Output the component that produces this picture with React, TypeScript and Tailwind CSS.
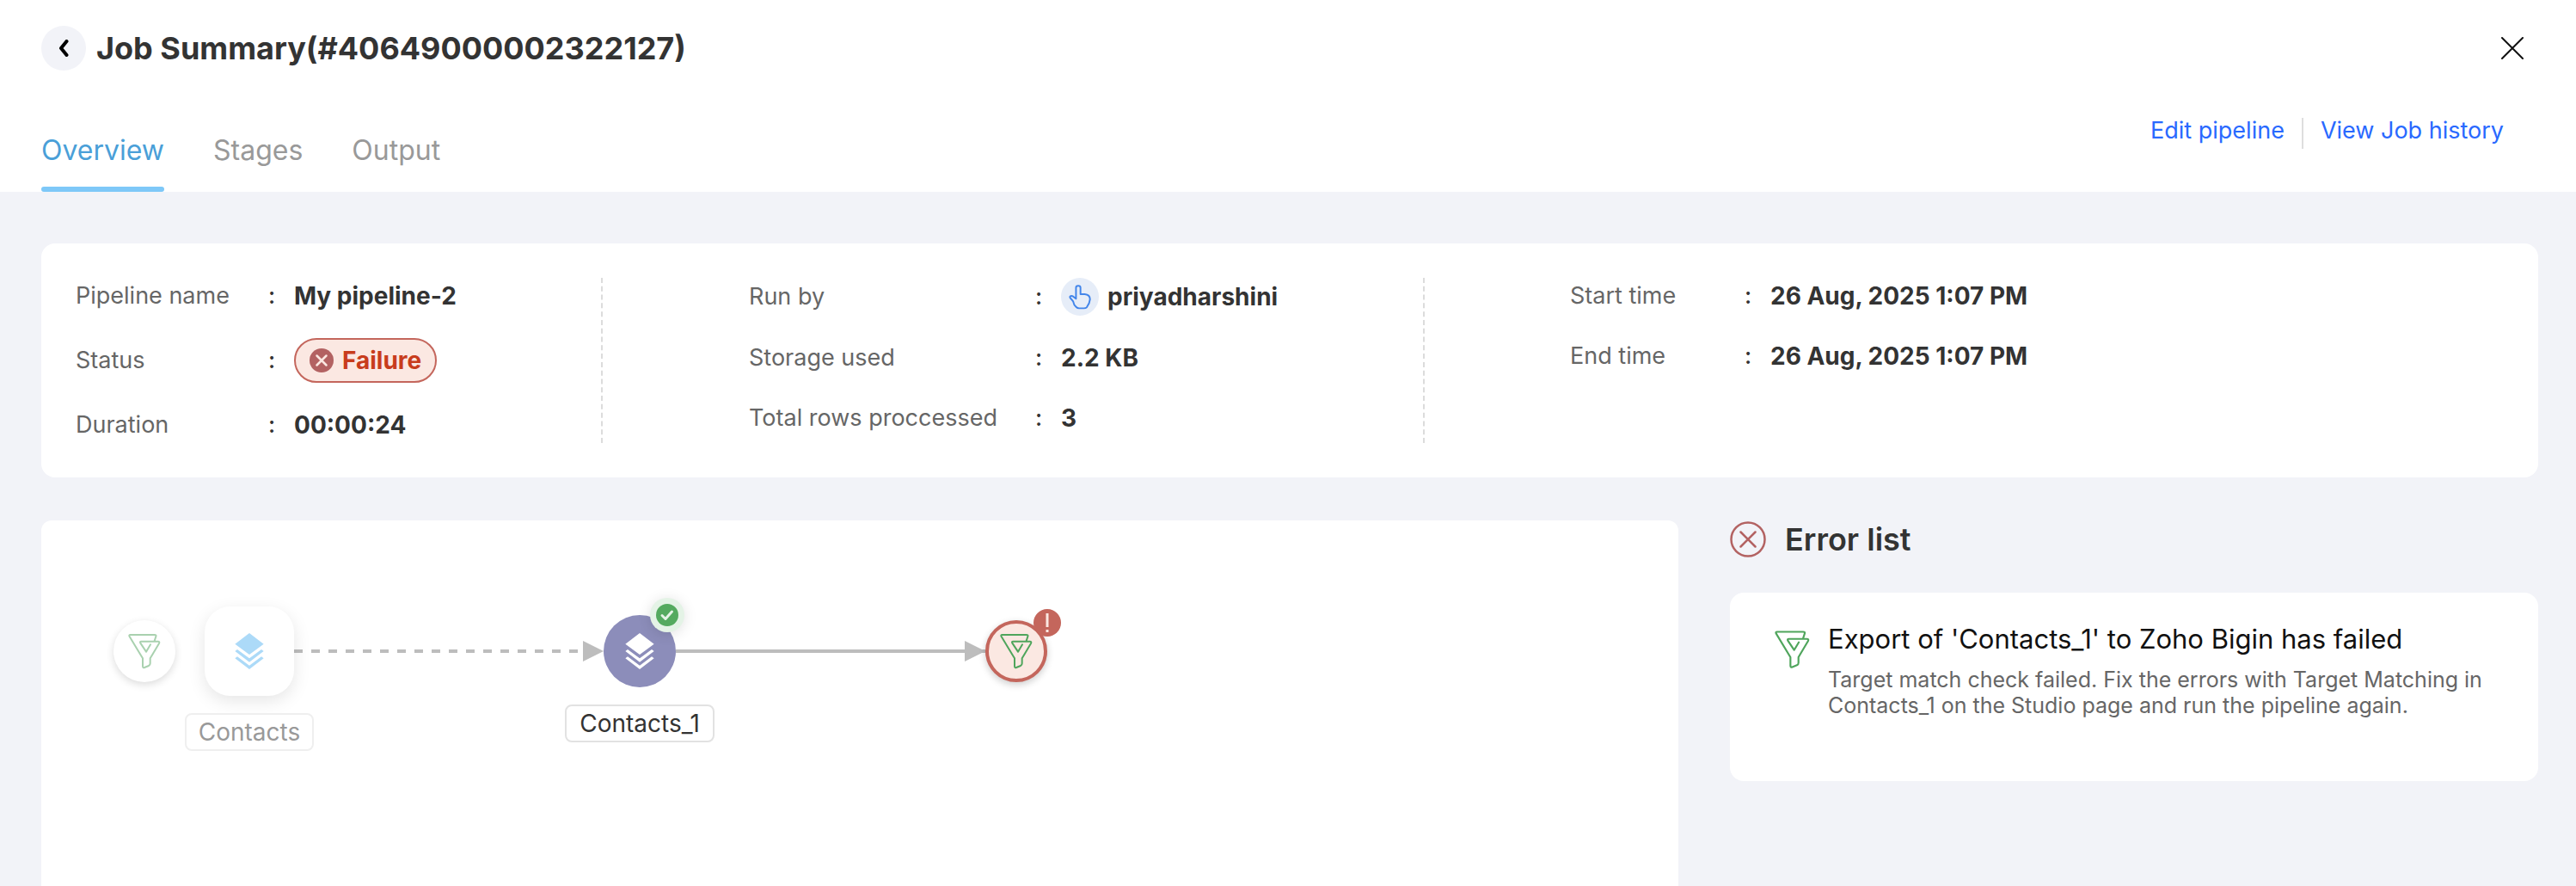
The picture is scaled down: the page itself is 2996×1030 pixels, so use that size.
import type { ReactNode } from 'react';

function FunnelIcon({ className }: { className: string }) {
  return (
    <svg viewBox="0 0 114 126" className={className} fill="none" stroke="currentColor" strokeWidth="6" strokeLinecap="round" strokeLinejoin="round" aria-hidden="true">
      <path d="M92 27 L97 12 Q99 6 92 6 H8 Q2 6 5 12 L51 88 V115 Q51 122 57 120 L72 114 Q77 112 77 106 V88 L108 36 Q111 29 104 29 H46 Q40 29 43 35 L63 65 L78 40" />
    </svg>
  );
}

function LayersIcon({ className }: { className: string }) {
  return (
    <svg viewBox="0 0 100 126" className={className} fill="currentColor" aria-hidden="true">
      <path d="M50 0 100 38 50 75 0 38Z" />
      <path d="M0 63 8 57 50 88 92 57 100 63 50 101Z" />
      <path d="M0 88 8 82 50 113 92 82 100 88 50 126Z" />
    </svg>
  );
}

function HandIcon() {
  return (
    <svg viewBox="64 58 84 92" className="h-[30px] w-[28px]" fill="none" stroke="#4285ea" strokeWidth="6" strokeLinejoin="round" aria-hidden="true">
      <path d="M92 72 Q92 65 100 65 Q108 65 108 72 V95 H123 Q142 97 142 113 Q141 128 130 142 Q127 145 120 145 H103 Q97 145 93 141 Q84 133 82 121 Q79 116 73 110 Q68 105 72 102 Q76 99 82 103 L92 111 Z" />
    </svg>
  );
}

function Field({ label, width, children }: { label: string; width: string; children: ReactNode }) {
  return (
    <div className="flex items-center">
      <dt className={`flex shrink-0 justify-between text-[27px] leading-[42px] text-[#666] ${width}`}>
        {label}
        <span className="w-[30px] font-medium text-[#333]">:</span>
      </dt>
      <dd className="text-[28px] leading-[42px] font-bold text-[#333]">{children}</dd>
    </div>
  );
}

function Summary() {
  return (
    <section className="grid grid-cols-[653fr_956fr_1295fr] rounded-2xl bg-white py-10">
      <dl className="flex flex-col gap-7 border-r-2 border-dashed border-[#dcdcdc] pl-10">
        <Field label="Pipeline name" width="w-[254px]">My pipeline-2</Field>
        <Field label="Status" width="w-[254px]">
          <span className="flex h-[52px] items-center gap-[10px] rounded-full border-2 border-[#c4665c] bg-[#fbe8e2] px-4 text-[#c83c1c]">
            <svg viewBox="0 0 28 28" className="size-7" aria-hidden="true">
              <circle cx="14" cy="14" r="14" fill="#b36262" />
              <path d="M8.500 8.500 19.500 19.500M19.500 8.500 8.500 19.500" stroke="#fbe8e2" strokeWidth="2.500" strokeLinecap="round" />
            </svg>
            Failure
          </span>
        </Field>
        <Field label="Duration" width="w-[254px]">00:00:24</Field>
      </dl>
      <dl className="flex flex-col gap-7 border-r-2 border-dashed border-[#dcdcdc] pl-[170px]">
        <Field label="Run by" width="w-[363px]">
          <span className="flex items-center gap-[10px]">
            <span className="flex size-11 items-center justify-center rounded-full bg-[#e6edf8]">
              <HandIcon />
            </span>
            priyadharshini
          </span>
        </Field>
        <Field label="Storage used" width="w-[363px]">2.2 KB</Field>
        <Field label="Total rows proccessed" width="w-[363px]">3</Field>
      </dl>
      <dl className="flex flex-col gap-7 pl-[169px]">
        <Field label="Start time" width="w-[233px]">26 Aug, 2025 1:07 PM</Field>
        <Field label="End time" width="w-[233px]">26 Aug, 2025 1:07 PM</Field>
      </dl>
    </section>
  );
}

function Canvas() {
  return (
    <section className="relative min-h-[425px] flex-[1904] overflow-hidden rounded-t-xl bg-white">
      <svg className="absolute top-[140px] left-[294px] h-6 w-[804px]" viewBox="0 0 804 24" aria-hidden="true">
        <path d="M0 12H334" stroke="#bdbdbd" strokeWidth="4" strokeDasharray="10 10" />
        <path d="M336 0 360 12 336 24Z" fill="#bdbdbd" />
        <path d="M444 12H804" stroke="#bdbdbd" strokeWidth="4" />
        <path d="M780 0 804 12 780 24Z" fill="#bdbdbd" />
      </svg>

      <div className="absolute top-[116px] left-[84px] flex size-[72px] items-center justify-center rounded-full bg-white shadow-[0_3px_10px_rgba(0,0,0,0.14)]">
        <FunnelIcon className="h-[42px] w-[38px] text-[#a9d1af]" />
      </div>

      <div className="absolute top-[100px] left-[190px] flex size-[104px] items-center justify-center rounded-[30px] bg-white shadow-[0_6px_20px_rgba(0,0,0,0.1)]">
        <LayersIcon className="h-[42px] w-[34px] text-[#acdaf8]" />
      </div>
      <div className="absolute top-[224px] left-[167px] flex h-11 w-[150px] items-center justify-center rounded-lg border-2 border-[#efefef] bg-white text-[28px] leading-10 text-[#999]">
        Contacts
      </div>

      <div className="absolute top-[110px] left-[654px] flex size-[84px] items-center justify-center rounded-full bg-[#8c8dba]">
        <LayersIcon className="h-[42px] w-[34px] text-white" />
        <div className="absolute -top-5 left-[54px] flex size-10 items-center justify-center rounded-full bg-[#e4f3e6] shadow-[0_2px_16px_rgba(0,0,0,0.12)]">
          <svg viewBox="0 0 26 26" className="size-[26px]" role="img" aria-label="Succeeded">
            <circle cx="13" cy="13" r="13" fill="#54aa5f" />
            <path d="M7 13.500 11 17.500 18.500 9" fill="none" stroke="#e4f3e6" strokeWidth="3" strokeLinecap="round" strokeLinejoin="round" />
          </svg>
        </div>
      </div>
      <div className="absolute top-[214px] left-[609px] flex h-11 w-[174px] items-center justify-center rounded-lg border-2 border-[#e2e2e2] bg-white text-[28px] leading-10 text-[#333]">
        Contacts_1
      </div>

      <div className="absolute top-[116px] left-[1098px] flex size-[72px] items-center justify-center rounded-full border-4 border-[#c4665c] bg-[#fbe8e2] shadow-[0_3px_8px_rgba(0,0,0,0.2)]">
        <FunnelIcon className="h-[42px] w-[38px] text-[#4fa55c]" />
      </div>
      <svg viewBox="0 0 32 32" className="absolute top-[103px] left-[1154px] size-8" role="img" aria-label="Failed">
        <circle cx="16" cy="16" r="16" fill="#c4665c" />
        <path d="M14.500 5h3v16h-3zM14.500 24h3v3h-3z" fill="#fbe8e2" />
      </svg>
    </section>
  );
}

function Errors() {
  return (
    <aside className="flex-[940]">
      <h2 className="flex h-11 items-center gap-[22px] text-[36px] leading-[44px] font-semibold text-[#333]">
        <svg viewBox="0 0 42 42" className="size-[42px]" fill="none" stroke="#b36262" strokeWidth="2.500" strokeLinecap="round" aria-hidden="true">
          <circle cx="21" cy="21" r="19.500" />
          <path d="M12.500 12.500 29.500 29.500M29.500 12.500 12.500 29.500" />
        </svg>
        Error list
      </h2>
      <article className="mt-10 flex gap-[21px] rounded-2xl bg-white pt-8 pr-[44px] pb-[73px] pl-[52px]">
        <FunnelIcon className="mt-[11px] h-[46px] w-[41px] shrink-0 text-[#4fa55c]" />
        <div>
          <h3 className="text-[31px] leading-[44px] text-[#111]">Export of 'Contacts_1' to Zoho Bigin has failed</h3>
          <p className="mt-[10px] text-[25px] leading-[30px] text-[#666]">
            Target match check failed. Fix the errors with Target Matching in Contacts_1 on the Studio page and run the pipeline again.
          </p>
        </div>
      </article>
    </aside>
  );
}

export default function App() {
  return (
    <div className="flex min-h-screen flex-col bg-[#f2f3f8] font-[Inter,sans-serif]">
      <header className="bg-white pt-[30px]">
        <div className="flex h-[52px] items-center justify-between pr-[61px] pl-12">
          <div className="flex items-center gap-3">
            <button type="button" aria-label="Back" className="flex size-[52px] items-center justify-center rounded-full bg-[#f2f3f8]">
              <svg viewBox="0 0 12 20" className="h-5 w-3" fill="none" stroke="#000" strokeWidth="4" strokeLinecap="round" strokeLinejoin="round" aria-hidden="true">
                <path d="M9.500 2 3 10 9.500 18" />
              </svg>
            </button>
            <h1 className="text-[36px] leading-[52px] font-bold text-[#333]">Job Summary(#40649000002322127)</h1>
          </div>
          <button type="button" aria-label="Close">
            <svg viewBox="0 0 26 26" className="size-[26px]" stroke="#111" strokeWidth="2" strokeLinecap="round" aria-hidden="true">
              <path d="M1 1 25 25M25 1 1 25" />
            </svg>
          </button>
        </div>
        <div className="flex h-[141px] justify-between pr-[84px] pl-12">
          <nav className="flex items-end gap-[57px] text-[32px] leading-[48px] text-[#999]">
            <button type="button" className="relative pb-6 text-[#4a9fd8]">
              Overview
              <span className="absolute inset-x-0 bottom-0 h-[6px] rounded-sm bg-[#7ec8f8]" />
            </button>
            <button type="button" className="pb-6">Stages</button>
            <button type="button" className="pb-6">Output</button>
          </nav>
          <div className="mt-[55px] flex h-9 text-[27px] leading-[30px] text-[#2969ff]">
            <a href="#edit">Edit pipeline</a>
            <span className="mx-5 w-[2px] bg-[#dedede]" />
            <a href="#history">View Job history</a>
          </div>
        </div>
      </header>
      <main className="flex flex-1 flex-col gap-[50px] pt-[60px] pr-[44px] pl-12">
        <Summary />
        <div className="flex flex-1 gap-[60px]">
          <Canvas />
          <Errors />
        </div>
      </main>
    </div>
  );
}
